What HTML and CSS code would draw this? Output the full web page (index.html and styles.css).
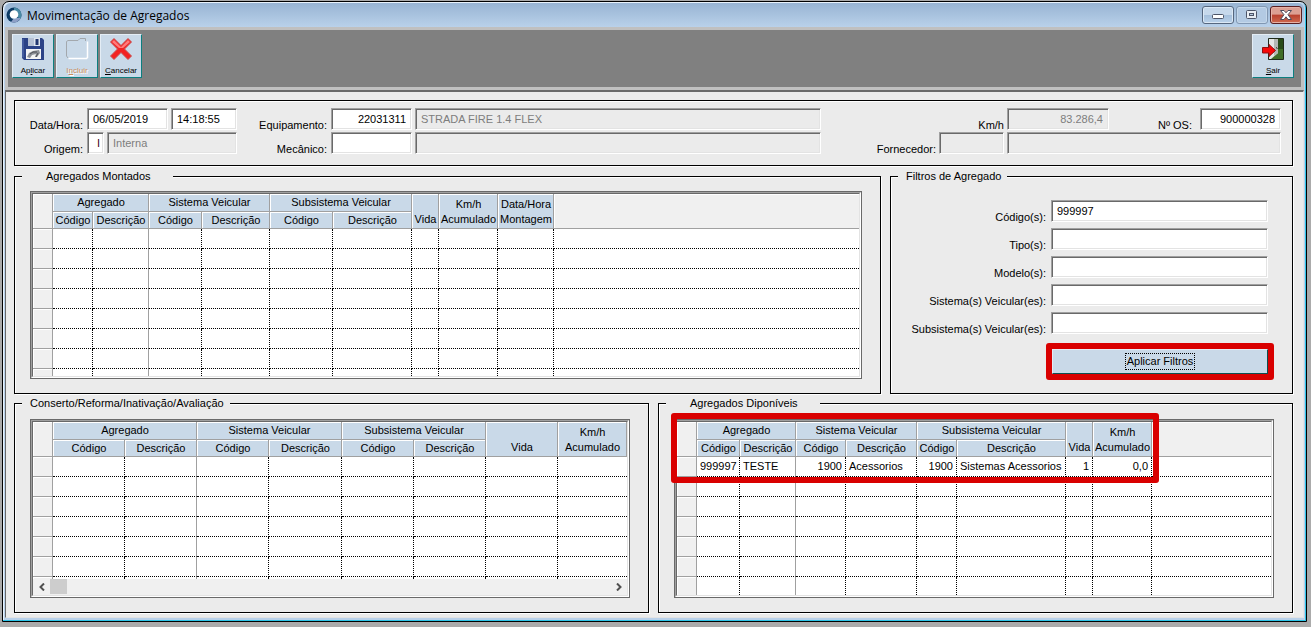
FILE: index.html
```html
<!DOCTYPE html>
<html lang="pt-BR">
<head>
    <meta charset="UTF-8">
    <title>Movimentação de Agregados</title>
    <link rel="stylesheet" href="styles.css">
</head>
<body>
    <div class="window">
        <header class="titlebar">
            <svg class="app-icon" width="16" height="16" viewBox="0 0 16 16">
                <circle cx="8" cy="8" r="7.5" fill="#0d3c66"/>
                <path d="M8 .5a7.500 7.500 0 0 1 6.500 11.200L11 10 8 4z" fill="#4a8aa6"/>
                <path d="M14.800 11A7.500 7.500 0 0 1 5 14.900L8 11z" fill="#8d9fc6"/>
                <circle cx="8" cy="7.500" r="4.300" fill="#fff"/>
                <path d="M4.500 10a4.500 4.500 0 0 0 7 0 4 4 0 0 1-7 0z" fill="#9fc4dc"/>
            </svg>
            <h1>Movimentação de Agregados</h1>
            <button class="win-button" aria-label="Minimizar">
                <svg width="14" height="12" viewBox="0 0 14 12"><rect x="1.500" y="5.500" width="11" height="4" rx="1" fill="#fff" stroke="#4d5568"/></svg>
            </button>
            <button class="win-button faded" aria-label="Maximizar">
                <svg width="14" height="12" viewBox="0 0 14 12"><rect x="1.500" y="1.500" width="10" height="8" rx="1" fill="#e8edf3" stroke="#4d5568"/><rect x="4.500" y="4.500" width="4" height="2" fill="#b8cade" stroke="#4d5568"/></svg>
            </button>
            <button class="win-button close" aria-label="Fechar">
                <svg width="14" height="12" viewBox="0 0 14 12"><path d="M1.500 1.500h3.500l2 2.300 2-2.300h3.500L9 5.700l3.500 4.800H9L7 7.800 5 10.500H1.500L5 5.700z" fill="#fff" stroke="#4d4a5c"/></svg>
            </button>
        </header>

        <nav class="toolbar">
            <button class="tool">
                <svg width="24" height="24" viewBox="0 0 24 24">
                    <path d="M1 1h20l2 2v20H3l-2-2z" fill="#2c4387"/>
                    <path d="M2 2v18.500" stroke="#5b74b5"/>
                    <path d="M7 1h12v8H7z" fill="#dfe5ee"/>
                    <path d="M7 1h6v8H7z" fill="#b6c1d4"/>
                    <path d="M14.500 2h3v6h-3z" fill="#23376f"/>
                    <path d="M5 12h15v10H5z" fill="#f4f4f4"/>
                    <path d="M6 20l2-4 4-2 6-1 1 3-3 4h-2l1-3-4 1-2 3z" fill="#8d9096"/>
                    <path d="M9 17l3-2h4M15 20l2-4" stroke="#4e5055" fill="none"/>
                </svg>
                <span>Ap<u>l</u>icar</span>
            </button>
            <button class="tool off" disabled>
                <svg width="24" height="24" viewBox="0 0 24 24">
                    <path d="M3.500 21.500h18l1-1V4.500" fill="none" stroke="#fff" stroke-width="1.500"/>
                    <path d="M1.500 19V4.500l1.500-1h10l2-2h5.500v2.500M1.500 19l1.500 2" fill="none" stroke="#a3a8ad"/>
                </svg>
                <span>I<u>n</u>cluir</span>
            </button>
            <button class="tool">
                <svg width="24" height="24" viewBox="0 0 24 24">
                    <path d="M5 1.500l7 7 7-7 3.500 3.500-7 7 7 7-3.500 3.500-7-7-7 7L1.500 19l7-7-7-7z" fill="#f32222" stroke="#c95050"/>
                    <path d="M5 3l7 7 7-7 2 2-7 6h-4L3 5z" fill="#ff7b7b"/>
                </svg>
                <span><u>C</u>ancelar</span>
            </button>
            <button class="tool exit">
                <svg width="24" height="24" viewBox="0 0 24 24">
                    <path d="M7.500 1.500h15v21h-15z" fill="#3f6d28" stroke="#1f2a1a"/>
                    <path d="M17 2h5v10h-5z" fill="#284b1a"/>
                    <path d="M8 2h9v14l-7 6H8z" fill="#e4e6e4"/>
                    <path d="M13 2h4v14l-4 3z" fill="#b4b8b4"/>
                    <path d="M15 10.500l1.500 1" stroke="#222"/>
                    <path d="M1.500 10.500H8V7.500l6.500 6L8 19.500v-3.500H1.500z" fill="#f60808" stroke="#8f1010"/>
                </svg>
                <span><u>S</u>air</span>
            </button>
        </nav>

        <main class="content">
            <section class="header-panel">
                <label for="data">Data/Hora:</label>
                <div class="fields">
                    <input class="w-code" id="data" value="06/05/2019">
                    <input class="grow" aria-label="Hora" value="14:18:55">
                </div>
                <label for="equipamento">Equipamento:</label>
                <div class="fields">
                    <input class="w-code num" id="equipamento" value="22031311">
                    <input class="grow" aria-label="Descrição do equipamento" value="STRADA FIRE 1.4 FLEX" readonly>
                </div>
                <div class="fields end">
                    <label for="km">Km/h</label>
                    <input class="w-km num" id="km" value="83.286,4" readonly>
                    <label class="w-os-label" for="os">Nº OS:</label>
                    <input class="w-code num" id="os" value="900000328">
                </div>

                <label for="origem">Origem:</label>
                <div class="fields">
                    <input class="w-origem num" id="origem" value="I">
                    <input class="grow" aria-label="Descrição da origem" value="Interna" readonly>
                </div>
                <label for="mecanico">Mecânico:</label>
                <div class="fields">
                    <input class="w-code" id="mecanico">
                    <input class="grow" aria-label="Nome do mecânico" readonly>
                </div>
                <div class="fields end">
                    <label for="fornecedor">Fornecedor:</label>
                    <input class="w-fornecedor" id="fornecedor" readonly>
                    <input class="w-fornecedor-nome" aria-label="Nome do fornecedor" readonly>
                </div>
            </section>

            <div class="row upper">
                <fieldset>
                    <legend class="wide">Agregados Montados</legend>
                    <div class="grid">
                        <div class="view">
                            <table class="montados" data-rows="7">
                                <colgroup><col><col><col><col><col><col><col><col><col><col><col></colgroup>
                                <thead>
                                    <tr>
                                        <th class="blank" rowspan="2"></th>
                                        <th colspan="2">Agregado</th>
                                        <th colspan="2">Sistema Veicular</th>
                                        <th colspan="2">Subsistema Veicular</th>
                                        <th class="tall" rowspan="2">Vida</th>
                                        <th class="tall" rowspan="2">Km/h<br>Acumulado</th>
                                        <th class="tall" rowspan="2">Data/Hora<br>Montagem</th>
                                        <th class="blank" rowspan="2"></th>
                                    </tr>
                                    <tr>
                                        <th>Código</th><th>Descrição</th>
                                        <th>Código</th><th>Descrição</th>
                                        <th>Código</th><th>Descrição</th>
                                    </tr>
                                </thead>
                                <tbody></tbody>
                            </table>
                        </div>
                    </div>
                </fieldset>

                <fieldset>
                    <legend>Filtros de Agregado</legend>
                    <form class="filters" onsubmit="return false">
                        <label for="f-codigo">Código(s):</label><input id="f-codigo" value="999997">
                        <label for="f-tipo">Tipo(s):</label><input id="f-tipo">
                        <label for="f-modelo">Modelo(s):</label><input id="f-modelo">
                        <label for="f-sistema">Sistema(s) Veicular(es):</label><input id="f-sistema">
                        <label for="f-subsistema">Subsistema(s) Veicular(es):</label><input id="f-subsistema">
                        <div class="apply">
                            <button><span>Aplicar Filtros</span></button>
                            <div class="marker"></div>
                        </div>
                    </form>
                </fieldset>
            </div>

            <div class="row lower">
                <fieldset>
                    <legend>Conserto/Reforma/Inativação/Avaliação</legend>
                    <div class="grid">
                        <div class="view">
                            <table class="conserto" data-rows="6">
                                <colgroup><col><col><col><col><col><col><col><col><col></colgroup>
                                <thead>
                                    <tr>
                                        <th class="blank" rowspan="2"></th>
                                        <th colspan="2">Agregado</th>
                                        <th colspan="2">Sistema Veicular</th>
                                        <th colspan="2">Subsistema Veicular</th>
                                        <th class="tall" rowspan="2">Vida</th>
                                        <th class="tall" rowspan="2">Km/h<br>Acumulado</th>
                                    </tr>
                                    <tr>
                                        <th>Código</th><th>Descrição</th>
                                        <th>Código</th><th>Descrição</th>
                                        <th>Código</th><th>Descrição</th>
                                    </tr>
                                </thead>
                                <tbody></tbody>
                            </table>
                            <div class="scrollbar">
                                <button aria-label="Rolar para a esquerda"><svg width="8" height="8" viewBox="0 0 8 8"><path d="M6 .5L2.500 4 6 7.500"/></svg></button>
                                <div class="thumb"></div>
                                <button aria-label="Rolar para a direita"><svg width="8" height="8" viewBox="0 0 8 8"><path d="M2 .5L5.500 4 2 7.500"/></svg></button>
                            </div>
                        </div>
                    </div>
                </fieldset>

                <fieldset>
                    <legend class="wide">Agregados Diponíveis</legend>
                    <div class="grid">
                        <div class="view">
                            <table class="disponiveis" data-rows="5">
                                <colgroup><col><col><col><col><col><col><col><col><col><col></colgroup>
                                <thead>
                                    <tr>
                                        <th class="blank" rowspan="2"></th>
                                        <th colspan="2">Agregado</th>
                                        <th colspan="2">Sistema Veicular</th>
                                        <th colspan="2">Subsistema Veicular</th>
                                        <th class="tall" rowspan="2">Vida</th>
                                        <th class="tall" rowspan="2">Km/h<br>Acumulado</th>
                                        <th class="blank" rowspan="2"></th>
                                    </tr>
                                    <tr>
                                        <th>Código</th><th>Descrição</th>
                                        <th>Código</th><th>Descrição</th>
                                        <th>Código</th><th>Descrição</th>
                                    </tr>
                                </thead>
                                <tbody>
                                    <tr>
                                        <td></td>
                                        <td class="num">999997</td><td>TESTE</td>
                                        <td class="num">1900</td><td>Acessorios</td>
                                        <td class="num">1900</td><td>Sistemas Acessorios</td>
                                        <td class="num">1</td><td class="num">0,0</td>
                                        <td></td>
                                    </tr>
                                </tbody>
                            </table>
                        </div>
                        <div class="marker"></div>
                    </div>
                </fieldset>
            </div>
        </main>
    </div>

    <script>
        // empty lines of each grid, plus the last one that is cut by the frame
        document.querySelectorAll("table").forEach(table => {
            const columns = table.querySelectorAll("col").length;
            const rows = Number(table.dataset.rows);
            for (let i = 0; i <= rows; i++) {
                const tr = table.tBodies[0].insertRow();
                if (i === rows) tr.className = "cut";
                for (let c = 0; c < columns; c++) tr.insertCell();
            }
        });
    </script>
</body>
</html>
```
FILE: styles.css
```css
* {
    box-sizing: border-box;
}
body {
    margin: 0;
    padding: 1px 4px 4px 2px;
    background: #ababab;
    font-family: "Liberation Sans", Arial, sans-serif;
    font-size: 11px;
    line-height: 15px;
    color: #000;
}
button, input {
    font: inherit;
    color: inherit;
    margin: 0;
    border-radius: 0;
}
.window {
    border: 1px solid #000;
    border-radius: 7px 7px 0 0;
    background: #b9d1ea;
    box-shadow: inset -1px -1px 0 #2cc4e8, inset 1px 1px 0 #e8f2fb;
    padding: 1px 2px 3px;
}

/* title bar */
.titlebar {
    display: flex;
    align-items: center;
    gap: 2px;
    height: 24px;
    padding: 0 2px 0 1px;
    border-radius: 6px 6px 0 0;
    background: linear-gradient(#98b4d3, #b9d1ea);
}
.titlebar h1 {
    flex: 1;
    margin: 0;
    padding-left: 3px;
    font-family: "Open Sans", "Noto Sans", sans-serif;
    font-size: 12px;
    font-weight: normal;
}
.win-button {
    display: flex;
    align-items: center;
    justify-content: center;
    width: 32px;
    height: 18px;
    padding: 0;
    border: 1px solid #56677f;
    border-radius: 3px;
    background: linear-gradient(#c6d8eb 50%, #a5bfdb 50%, #b9d1ea);
    box-shadow: inset 0 0 0 1px #dbe8f5;
}
.win-button svg {
    flex: none;
}
.win-button.faded {
    border-color: #8197b2;
    background: #b3cae3;
    box-shadow: inset 0 0 0 1px #c5d8eb;
}
.win-button.close {
    border-color: #5a1f22;
    background: linear-gradient(#dc9f93 45%, #b8402e 50%, #cf6a50);
    box-shadow: inset 0 0 0 1px #e6b1a6;
}

/* toolbar */
.toolbar {
    display: flex;
    gap: 2px;
    padding: 4px 7px 9px 4px;
    border: 3px solid #c0c0c0;
    background: #808080;
}
.tool {
    display: flex;
    flex-direction: column;
    align-items: center;
    justify-content: space-between;
    width: 42px;
    height: 44px;
    padding: 2px 0 1px;
    border: 1px solid #e4edf5;
    border-right-color: #0c7f80;
    border-bottom-color: #0c7f80;
    background: #c9d9e8;
    font-size: 8px;
    line-height: 10px;
}
.tool.off {
    color: #c98d5c;
    text-shadow: 1px 1px 0 #fff;
}
.tool.exit {
    margin-left: auto;
}

/* content */
.content {
    padding: 8px 10px 2px 8px;
    border: 1px solid #e3e3e3;
    border-top: 2px solid #696969;
    border-left-color: #696969;
    background: #ebebeb;
}
input {
    height: 22px;
    min-width: 0;
    padding: 0 5px;
    border: 1px solid #a0a0a0;
    border-right-color: #fff;
    border-bottom-color: #fff;
    background: #fff;
    box-shadow: inset 1px 1px 0 #696969, inset -1px -1px 0 #e3e3e3;
    outline: none;
}
input[readonly] {
    background: #ebebeb;
    color: #7d7d7d;
}
.num {
    text-align: right;
}
label {
    align-self: end;
    line-height: 13px;
    text-align: right;
    white-space: nowrap;
}
.header-panel {
    display: grid;
    grid-template-columns: 68px 150px 86px 1fr 456px;
    grid-auto-rows: 24px;
    column-gap: 4px;
    margin-bottom: 3px;
    padding: 7px 11px 9px 0;
    border: 1px solid #000;
    box-shadow: 1px 1px 0 #fff, inset 1px 1px 0 #fff;
}
.fields {
    display: flex;
    align-items: start;
    gap: 3px;
}
.fields.end {
    justify-content: flex-end;
}
.grow {
    flex: 1;
}
.w-code {
    width: 81px;
}
.w-km {
    width: 102px;
}
.w-os-label {
    width: 85px;
    padding-right: 5px;
}
.w-origem {
    width: 17px;
    padding: 0 3px;
    color: #400020;
}
.w-fornecedor {
    width: 65px;
}
.w-fornecedor-nome {
    width: 274px;
}

/* groups */
.row {
    display: grid;
    gap: 9px;
    margin-bottom: 2px;
}
.upper {
    grid-template-columns: 1fr 403px;
}
.lower {
    grid-template-columns: 1fr 1fr;
}
fieldset {
    min-width: 0;
    margin: 0;
    padding: 7px 18px 14px 15px;
    border: 1px solid #000;
    box-shadow: 1px 1px 0 #fff, inset 1px 1px 0 #fff;
}
.lower fieldset {
    padding-top: 8px;
}
legend {
    margin-left: -8px;
    padding: 0 6px 0 8px;
    background: #ebebeb;
}
legend.wide {
    padding: 0 22px 0 24px;
}

/* grids */
.grid {
    position: relative;
    border: 1px solid #696969;
}
.view {
    border: 1px solid #a0a0a0;
    border-right-color: #fff;
    border-bottom-color: #fff;
}
table {
    width: 100%;
    table-layout: fixed;
    border-collapse: separate;
    border-spacing: 0;
    border: 1px solid #696969;
    border-right-color: #e3e3e3;
    border-bottom-color: #e3e3e3;
    background: #fff;
}
th, td {
    height: 20px;
    padding: 0 3px;
    border-right: 1px dotted #000;
    border-bottom: 1px dotted #000;
    overflow: hidden;
    white-space: nowrap;
    text-align: left;
    font-weight: normal;
}
th {
    height: 17px;
    padding: 0 0 0 1px;
    border-right: 1px solid #a0a0a0;
    border-bottom: 1px solid #a0a0a0;
    background: #c9d9e8;
    box-shadow: inset 1px 1px 0 #fff;
    text-align: center;
}
thead tr:first-child th {
    height: 18px;
}
th.tall {
    padding-bottom: 1px;
    vertical-align: bottom;
}
th.blank {
    background: #f0f0f0;
}
td.num {
    text-align: right;
}
td:first-child {
    border-right: 1px solid #a0a0a0;
    border-bottom: 1px solid #a0a0a0;
    background: #f0f0f0;
    box-shadow: inset 1px 1px 0 #fff;
}
td:nth-child(3) {
    border-right: 1px solid #a0a0a0;
}
th.blank:last-child, td:last-child {
    border-right: none;
}
.cut td {
    height: 7px;
    border-bottom: none;
}
.conserto .cut td {
    height: 2px;
}
.disponiveis .cut td {
    height: 18px;
}
col:first-child { width: 20px; }

.montados col:nth-child(2) { width: 40px; }
.montados col:nth-child(3) { width: 56px; }
.montados col:nth-child(4) { width: 53px; }
.montados col:nth-child(5) { width: 68px; }
.montados col:nth-child(6) { width: 63px; }
.montados col:nth-child(7) { width: 79px; }
.montados col:nth-child(8) { width: 27px; }
.montados col:nth-child(9) { width: 59px; }
.montados col:nth-child(10) { width: 56px; }

.conserto {
    border-bottom: none;
}
.conserto col:nth-child(n+2) { width: 72px; }
.conserto col:nth-child(5) { width: 73px; }
.conserto col:last-child { width: auto; }

.disponiveis col:nth-child(2) { width: 43px; }
.disponiveis col:nth-child(3) { width: 56px; }
.disponiveis col:nth-child(4) { width: 50px; }
.disponiveis col:nth-child(5) { width: 71px; }
.disponiveis col:nth-child(6) { width: 40px; }
.disponiveis col:nth-child(7) { width: 109px; }
.disponiveis col:nth-child(8) { width: 27px; }
.disponiveis col:nth-child(9) { width: 59px; }

.scrollbar {
    display: flex;
    height: 17px;
    border: 1px solid #696969;
    border-width: 0 1px 1px;
    border-right-color: #e3e3e3;
    border-bottom-color: #e3e3e3;
    background: #f0f0f0;
}
.scrollbar button {
    width: 17px;
    padding: 0;
    border: none;
    background: none;
}
.scrollbar button:last-child {
    margin-left: auto;
}
.scrollbar svg {
    display: block;
    margin: 0 auto;
    fill: none;
    stroke: #505050;
    stroke-width: 2;
}
.thumb {
    width: 17px;
    margin-bottom: 1px;
    background: #cdcdcd;
}

/* filters */
.filters {
    display: grid;
    grid-template-columns: 1fr 217px;
    grid-auto-rows: 24px;
    gap: 4px 5px;
    padding: 9px 6px 0 0;
}
.apply {
    position: relative;
    grid-column: 2;
    align-self: start;
    margin: 9px 0 0 1px;
}
.apply button {
    display: block;
    width: 100%;
    height: 25px;
    padding: 0;
    border: 1px solid #e4edf5;
    border-right-color: #0c4f50;
    border-bottom-color: #0c4f50;
    background: #c9d9e8;
}
.apply span {
    display: inline-block;
    padding: 0 1px;
    border: 1px dotted #000;
}

/* red highlights over the controls */
.marker {
    position: absolute;
    inset: -6px;
    border: 6px solid #d90000;
    border-radius: 3px;
    pointer-events: none;
}
.grid .marker {
    inset: -7px auto auto -4px;
    width: 488px;
    height: 70px;
}
```
